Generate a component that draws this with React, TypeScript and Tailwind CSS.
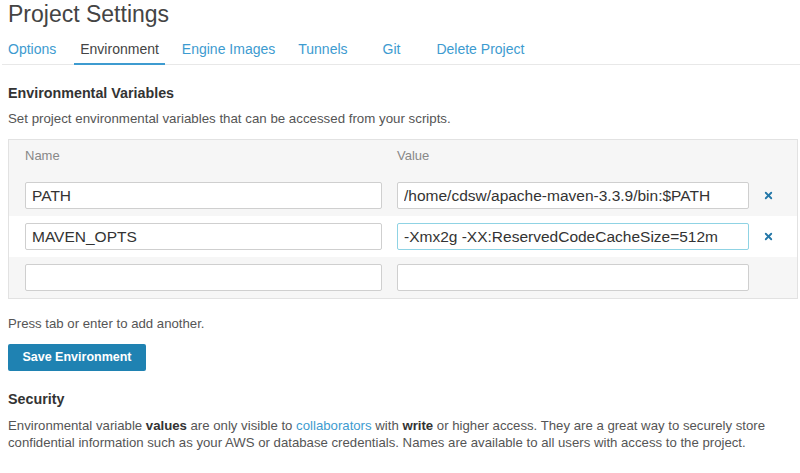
import { X } from "lucide-react";

const tabs = [
  { label: "Options", cls: "" },
  { label: "Environment", cls: "ml-[12px]", active: true },
  { label: "Engine Images", cls: "ml-[11px]" },
  { label: "Tunnels", cls: "ml-[11px]" },
  { label: "Git", cls: "ml-[23px]" },
  { label: "Delete Project", cls: "ml-[24px]" },
];

const rows = [
  { name: "PATH", value: "/home/cdsw/apache-maven-3.3.9/bin:$PATH", remove: true },
  { name: "MAVEN_OPTS", value: "-Xmx2g -XX:ReservedCodeCacheSize=512m", remove: true, focused: true },
  { name: "", value: "", remove: false },
];

export default function App() {
  return (
    <div className="min-h-[473px] w-[800px] bg-white pl-2 text-[#555] font-['Liberation_Sans',Arial,sans-serif]">
      <h1 className="h-[28px] text-[23px] leading-[28px] text-[#444]">Project Settings</h1>

      <nav className="mt-[5px] -ml-[6px] flex border-b border-[#e8e8e8]">
        {tabs.map((t) => (
          <a
            key={t.label}
            className={`${t.cls} -mb-px border-b-2 px-[6px] pt-[7px] pb-[4px] text-[14px] leading-[19px] ${
              t.active ? "border-[#3d9bd0] text-[#444]" : "border-transparent text-[#3d9bd0]"
            }`}
          >
            {t.label}
          </a>
        ))}
      </nav>

      <h2 className="mt-[19px] text-[14.3px] leading-[18px] font-bold text-[#333]">Environmental Variables</h2>
      <p className="mt-[8px] text-[13.3px] leading-[18px]">
        Set project environmental variables that can be accessed from your scripts.
      </p>

      <div className="mt-[11px] mr-[2px] border border-[#e2e2e2] bg-[#f6f6f6]">
        <div className="flex pt-[8px] pb-[11px] pl-[16px] text-[13px] leading-[16px] text-[#888]">
          <span className="w-[357px]">Name</span>
          <span className="ml-[15px]">Value</span>
        </div>
        {rows.map((r, i) => (
          <div key={i} className={`flex items-center py-[7px] pl-[16px] ${r.focused ? "bg-white" : ""}`}>
            <input
              readOnly
              value={r.name}
              className="h-[27px] w-[357px] rounded-[2px] border border-[#cfcfcf] bg-white px-[6px] text-[15.5px] text-[#333] outline-none"
            />
            <input
              readOnly
              value={r.value}
              className={`ml-[15px] h-[27px] w-[352px] rounded-[2px] border bg-white px-[6px] text-[15.5px] text-[#333] outline-none ${
                r.focused ? "border-[#8fd3e4]" : "border-[#cfcfcf]"
              }`}
            />
            <span className="flex w-[38px] justify-center">
              {r.remove && <X className="h-[11px] w-[11px] text-[#2477a8]" strokeWidth={4} />}
            </span>
          </div>
        ))}
      </div>

      <p className="mt-[16px] text-[13.2px] leading-[18px]">Press tab or enter to add another.</p>

      <button className="mt-[11px] h-[27px] w-[138px] rounded-[2px] bg-[#1f82b2] text-[12.5px] font-bold text-white">
        Save Environment
      </button>

      <h2 className="mt-[19px] text-[14.3px] leading-[18px] font-bold text-[#333]">Security</h2>
      <p className="mt-[9px] w-[785px] text-[13.2px] leading-[17px]">
        Environmental variable <b className="text-[#333]">values</b> are only visible to{" "}
        <a className="text-[#3d9bd0]">collaborators</a> with <b className="text-[#333]">write</b> or higher access.
        They are a great way to securely store confidential information such as your AWS or database credentials.
        Names are available to all users with access to the project.
      </p>
    </div>
  );
}
